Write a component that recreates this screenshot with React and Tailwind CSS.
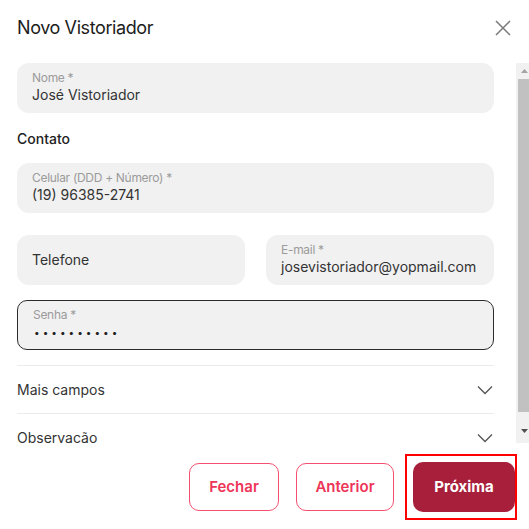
import React from 'react';

function Field({ label, value, className = '', bordered = false, children }) {
  return (
    <div
      className={`h-[50px] bg-[#f1f1f1] pl-[15px] pr-[15px] flex flex-col justify-center overflow-hidden ${bordered ? 'border border-[#2b2b2b] rounded-[10px]' : 'rounded-[12px]'} ${className}`}
    >
      {label && <span className="text-[12px] leading-[14px] tracking-[-0.3px] text-[#9b9b9b]">{label}</span>}
      {children || <span className="text-[14px] leading-[20px] text-[#333] whitespace-nowrap">{value}</span>}
    </div>
  );
}

function Chevron() {
  return (
    <svg width="16" height="10" viewBox="0 0 16 10" fill="none" stroke="#555" strokeWidth="1.3">
      <path d="M1 1.5 L8 8.5 L15 1.5" />
    </svg>
  );
}

function Row({ title }) {
  return (
    <div className="h-[48px] flex items-center justify-between border-t border-[#ececec] pr-[1px]">
      <span className="text-[14px] text-[#333]">{title}</span>
      <Chevron />
    </div>
  );
}

// classic scrollbar look, content is only a bit taller than the viewport
function Scrollbar() {
  return (
    <div className="w-[13px] shrink-0 bg-[#f1f1f1] flex flex-col">
      <div className="h-[16px] flex items-center justify-center pl-[3px]">
        <svg width="7" height="4" viewBox="0 0 7 4"><path d="M0 4 L3.5 0 L7 4 Z" fill="#a3a3a3" /></svg>
      </div>
      <div className="h-[333px] ml-[2px] bg-[#c1c1c1]" />
      <div className="flex-1 flex items-center justify-center pl-[3px] pt-[6px]">
        <svg width="7" height="4" viewBox="0 0 7 4"><path d="M0 0 L7 0 L3.5 4 Z" fill="#505050" /></svg>
      </div>
    </div>
  );
}

export default function App() {
  return (
    <div className="w-[529px] h-[529px] bg-white flex flex-col overflow-hidden" style={{ fontFamily: 'Inter, "Noto Sans", sans-serif' }}>
      <div className="h-[63px] shrink-0 flex items-start justify-between pl-[17px] pr-[18px] pt-[17px]">
        <h1 className="text-[18px] leading-[22px] tracking-[-0.4px] text-[#1c1c1c]">Novo Vistoriador</h1>
        <svg width="16" height="16" viewBox="0 0 16 16" fill="none" stroke="#7a7a7a" strokeWidth="1.5" className="mt-[3px]">
          <path d="M1 1 L15 15 M15 1 L1 15" />
        </svg>
      </div>

      <div className="h-[380px] shrink-0 flex">
        <div className="flex-1 overflow-hidden">
          <div className="pl-[17px] pr-[22px] flex flex-col">
            <Field label="Nome *" value="José Vistoriador" />
            <div className="h-[50px] flex items-center">
              <span className="text-[14px] font-medium text-[#222]">Contato</span>
            </div>
            <Field label="Celular (DDD + Número) *" value="(19) 96385-2741" />
            <div className="grid grid-cols-2 gap-[21px] mt-[22px]">
              <Field value="Telefone" />
              <Field label="E-mail *" value="josevistoriador@yopmail.com" />
            </div>
            <Field label="Senha *" bordered className="mt-[15px]">
              <span className="text-[10px] leading-[20px] tracking-[3px] text-[#222] pl-[1px]">••••••••••</span>
            </Field>
            <div className="mt-[15px]">
              <Row title="Mais campos" />
              <Row title="Observação" />
            </div>
          </div>
        </div>
        <Scrollbar />
      </div>

      <div className="flex justify-end items-center pt-[11px] pr-[12px]">
        <button className="w-[90px] h-[48px] rounded-[10px] border border-[#f2506e] text-[#ee3558] text-[15px] font-semibold">Fechar</button>
        <button className="w-[98px] h-[48px] ml-[17px] rounded-[10px] border border-[#f2506e] text-[#ee3558] text-[15px] font-semibold">Anterior</button>
        <div className="ml-[11px] border-[2px] border-[#ff0000] pl-[6px] py-[6px]">
          <button className="w-[102px] h-[50px] rounded-[10px] bg-[#a81f3b] text-white text-[15px] font-bold">Próxima</button>
        </div>
      </div>
    </div>
  );
}
